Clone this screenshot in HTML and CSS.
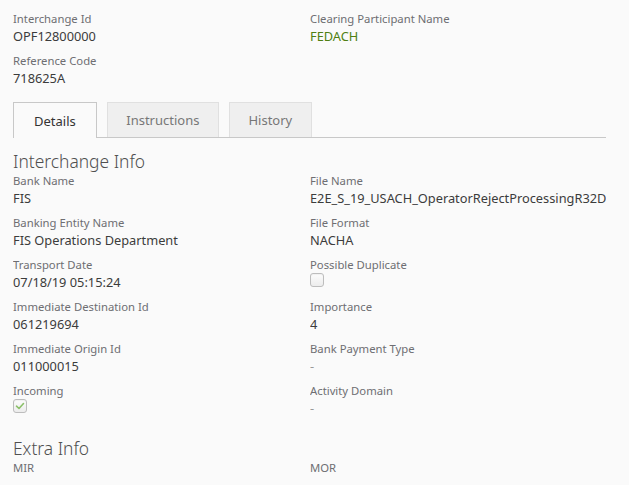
FILE: index.html
```
<!DOCTYPE html>
<html>
<head>
<meta charset="utf-8">
<link rel="stylesheet" href="styles.css">
</head>
<body>
<div class="page">
  <div class="grid">
    <div class="field"><div class="label">Interchange Id</div><div class="value">OPF12800000</div></div>
    <div class="field"><div class="label">Clearing Participant Name</div><div class="value green">FEDACH</div></div>
    <div class="field"><div class="label">Reference Code</div><div class="value">718625A</div></div>
  </div>
  <div class="tabs">
    <div class="tab active">Details</div>
    <div class="tab">Instructions</div>
    <div class="tab">History</div>
  </div>
  <h2 class="section">Interchange Info</h2>
  <div class="grid">
    <div class="field"><div class="label">Bank Name</div><div class="value">FIS</div></div>
    <div class="field"><div class="label">File Name</div><div class="value">E2E_S_19_USACH_OperatorRejectProcessingR32D.ach</div></div>
    <div class="field"><div class="label">Banking Entity Name</div><div class="value">FIS Operations Department</div></div>
    <div class="field"><div class="label">File Format</div><div class="value">NACHA</div></div>
    <div class="field"><div class="label">Transport Date</div><div class="value">07/18/19 05:15:24</div></div>
    <div class="field"><div class="label">Possible Duplicate</div><div class="value"><span class="checkbox"></span></div></div>
    <div class="field"><div class="label">Immediate Destination Id</div><div class="value">061219694</div></div>
    <div class="field"><div class="label">Importance</div><div class="value">4</div></div>
    <div class="field"><div class="label">Immediate Origin Id</div><div class="value">011000015</div></div>
    <div class="field"><div class="label">Bank Payment Type</div><div class="value muted">-</div></div>
    <div class="field"><div class="label">Incoming</div><div class="value"><span class="checkbox checked"><svg viewBox="0 0 14 14" width="14" height="14"><path d="M3.5 7.2 L6 9.5 L10.5 4.5" fill="none" stroke="#8cc06a" stroke-width="1.6" stroke-linecap="round" stroke-linejoin="round"/></svg></span></div></div>
    <div class="field"><div class="label">Activity Domain</div><div class="value muted">-</div></div>
  </div>
  <h2 class="section">Extra Info</h2>
  <div class="grid">
    <div class="field"><div class="label">MIR</div></div>
    <div class="field"><div class="label">MOR</div></div>
  </div>
</div>
</body>
</html>
```
FILE: styles.css
```
html, body {
  margin: 0;
  padding: 0;
  background: #fafafa;
}
body {
  font-family: "Noto Sans", "Open Sans", sans-serif;
  color: #333;
  overflow: hidden;
}
.page {
  width: 593px;
  padding: 11px 0 0 13px;
}
.grid {
  display: grid;
  grid-template-columns: 297px 296px;
}
.field {
  margin-bottom: 8px;
  min-width: 0;
  overflow: hidden;
}
.label {
  font-size: 11.3px;
  line-height: 16px;
  color: #6e6e72;
  white-space: nowrap;
}
.value {
  font-size: 12.8px;
  line-height: 18px;
  color: #3c3c3c;
  white-space: nowrap;
  overflow: hidden;
  display: flex;
  align-items: center;
}
.value.green {
  color: #4f7f12;
}
.value.muted {
  color: #999;
}
.tabs {
  display: flex;
  gap: 10px;
  margin-top: 7px;
  border-bottom: 1px solid #c8c8c8;
  height: 35px;
}
.tab {
  height: 35px;
  box-sizing: border-box;
  border: 1px solid #e0e0e0;
  border-bottom: none;
  background: #efefef;
  color: #777;
  font-size: 13px;
  padding: 0 18.5px;
  display: flex;
  align-items: center;
}
.tab.active {
  height: 36px;
  padding: 0 20px;
  background: #fafafa;
  border-color: #c8c8c8;
  color: #333;
}
.section {
  margin: 12px 0 1px;
  font-size: 17.4px;
  line-height: 22px;
  font-weight: 300;
  color: #505050;
}
.checkbox {
  display: inline-block;
  width: 14px;
  height: 14px;
  box-sizing: border-box;
  border: 1px solid #bdbdbd;
  border-radius: 3px;
  background: linear-gradient(#fdfdfd, #ececec);
  box-shadow: inset 0 1px 1px rgba(0,0,0,0.05);
  position: relative;
}
.checkbox svg {
  position: absolute;
  left: -1px;
  top: -1px;
}
```
